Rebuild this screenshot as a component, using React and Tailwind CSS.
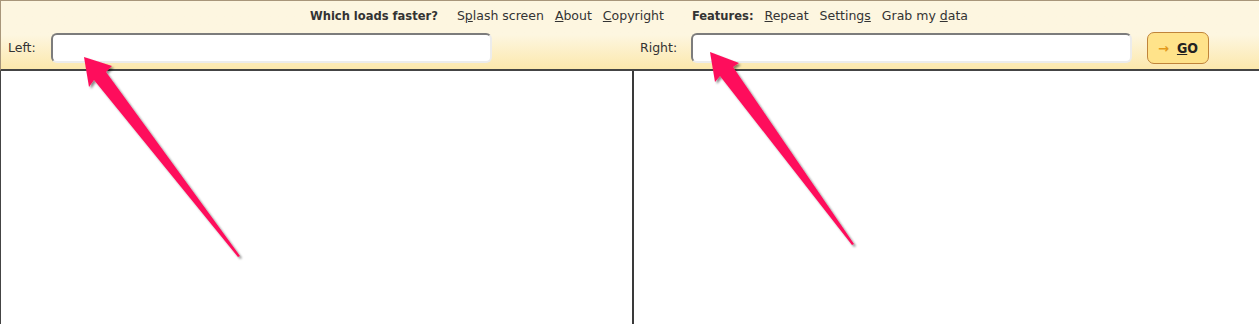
export default function App() {
  const bold = "font-bold font-['DejaVu_Sans_Condensed','DejaVu_Sans',sans-serif]";
  return (
    <div className="relative w-[1259px] h-[324px] overflow-hidden bg-white font-['DejaVu_Sans','Verdana',sans-serif] text-[12.5px] text-[#333]">
      <header className="h-[71px] border-t border-l border-[#a8967a] border-b-2 border-b-[#444] bg-linear-to-b from-[#fdf6e0] from-50% to-[#fce8ac]">
        <div className="flex items-center h-[20px] mt-[5px] pl-[309px] whitespace-nowrap">
          <span className={bold + " text-[12.8px]"}>Which loads faster?</span>
          <span className="ml-[19px]">S<u>p</u>lash screen</span>
          <span className="ml-[11px]"><u>A</u>bout</span>
          <span className="ml-[11px]"><u>C</u>opyright</span>
          <span className={"ml-[28px] text-[12.8px] " + bold}>Features:</span>
          <span className="ml-[11px]"><u>R</u>epeat</span>
          <span className="ml-[11px]">Setting<u>s</u></span>
          <span className="ml-[11px]">Grab my <u>d</u>ata</span>
        </div>
        <div className="flex items-center mt-[6px] h-[32px]">
          <div className="flex items-center w-[632px]">
            <span className="ml-[7px] w-[43px]">Left:</span>
            <input className="w-[441px] h-[30px] bg-white rounded-[6px] border-2 border-t-[#7c7c7c] border-l-[#7c7c7c] border-b-[#ececec] border-r-[#ececec] outline-none" />
          </div>
          <div className="flex items-center">
            <span className="ml-[7px] w-[51px]">Right:</span>
            <input className="w-[441px] h-[30px] bg-white rounded-[6px] border-2 border-t-[#7c7c7c] border-l-[#7c7c7c] border-b-[#ececec] border-r-[#ececec] outline-none" />
            <button className="ml-[15px] w-[62px] h-[32px] flex items-center justify-center gap-[8px] bg-[#ffe38a] border border-[#c0843a] rounded-[7px] text-[#222]">
              <span className="text-[#e39a1c] text-[13px] font-bold leading-none">→</span>
              <span className={bold + " text-[14px]"}><u>G</u>O</span>
            </button>
          </div>
        </div>
      </header>
      <main className="flex h-[253px] border-l border-[#444]">
        <div className="w-[633px] h-full border-r-2 border-[#3a3a3a]"></div>
        <div className="flex-1 h-full"></div>
      </main>
      <svg className="absolute inset-0 pointer-events-none" width="1259" height="324" viewBox="0 0 1259 324">
        <defs>
          <filter id="sh" x="-20%" y="-20%" width="140%" height="140%">
            <feDropShadow dx="2" dy="2" stdDeviation="1.2" floodColor="#000" floodOpacity="0.45" />
          </filter>
        </defs>
        <polygon filter="url(#sh)" fill="#fe0f5b" points="84,57 112,66 106,72 240,256 238,257 94,80 89,87" />
        <polygon filter="url(#sh)" fill="#fe0f5b" points="710,52 739,63 733,67 854,244 852,245 720,76 715,82" />
      </svg>
    </div>
  );
}
